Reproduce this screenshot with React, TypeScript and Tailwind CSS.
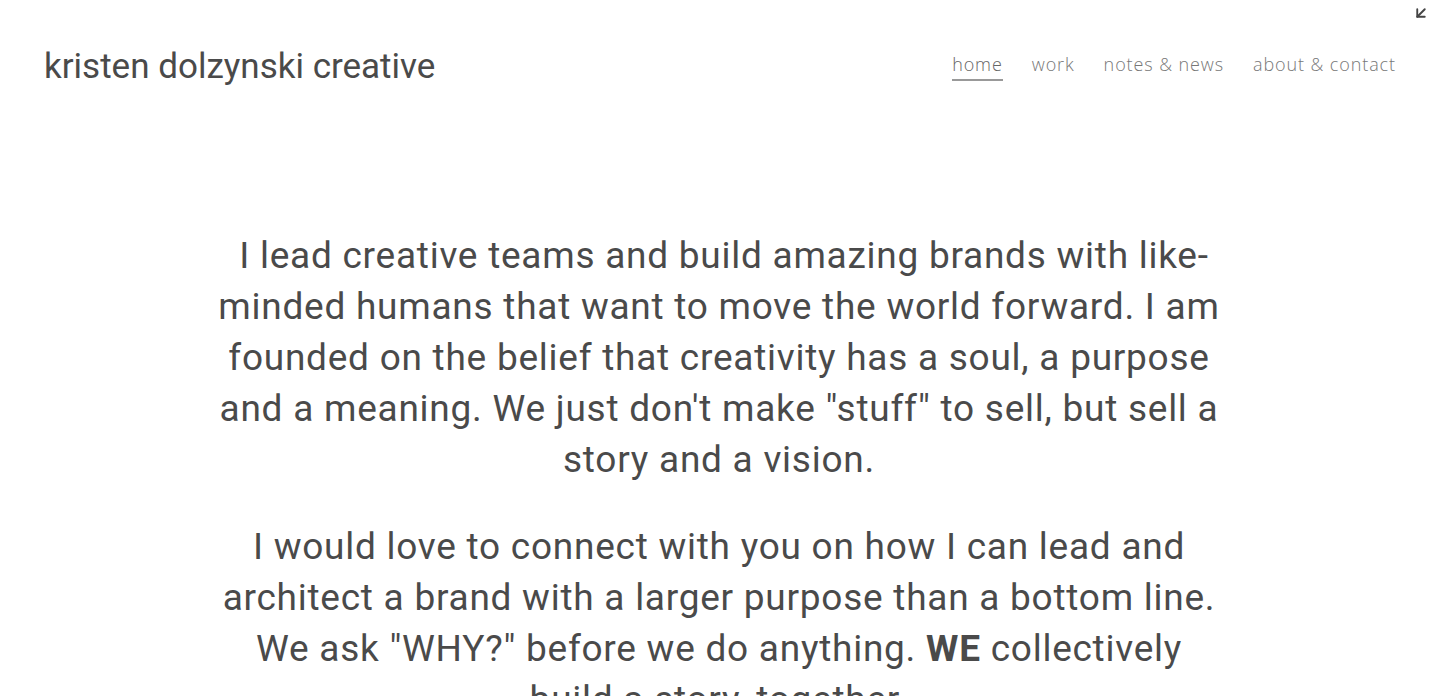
import { ArrowDownLeft } from "lucide-react";

const navItems = ["home", "work", "notes & news", "about & contact"];

export default function App() {
  return (
    <div className="relative h-[696px] overflow-hidden bg-white text-[#4a4a4a]">
      <ArrowDownLeft className="absolute right-[8px] top-[4px] h-[18px] w-[18px] text-[#444]" strokeWidth={2.5} />

      <header className="flex items-center justify-between pl-[44px] pr-[42px] pt-[44px]">
        <div className="text-[35px] leading-[46px] text-[#4a4a4a] [font-family:Roboto,sans-serif]">
          kristen dolzynski creative
        </div>
        <nav className="-mt-[3px] flex gap-[29px] text-[18px] font-light tracking-[0.9px] text-[#777] [font-family:'Open_Sans',sans-serif]">
          {navItems.map((item, i) => (
            <a
              key={item}
              className={
                i === 0
                  ? "border-b-2 border-[#999] pb-[1px] text-[#666]"
                  : "pb-[3px]"
              }
            >
              {item}
            </a>
          ))}
        </nav>
      </header>

      <main className="mx-auto mt-[140px] w-[1010px] text-center text-[37px] leading-[51px] tracking-[0.75px] [font-family:Roboto,sans-serif]">
        <p className="mb-[36px]">
          &nbsp;I lead creative teams and build amazing brands with like-minded humans that want to
          move the world forward. I am founded on the belief that creativity has a soul, a purpose
          and a meaning. We just don't make "stuff" to sell, but sell a story and a vision.
        </p>
        <p>
          I would love to connect with you on how I can lead and architect a brand with a larger
          purpose than a bottom line. We ask "WHY?" before we do anything. <b>WE</b> collectively
          build a story, together.
        </p>
      </main>
    </div>
  );
}
